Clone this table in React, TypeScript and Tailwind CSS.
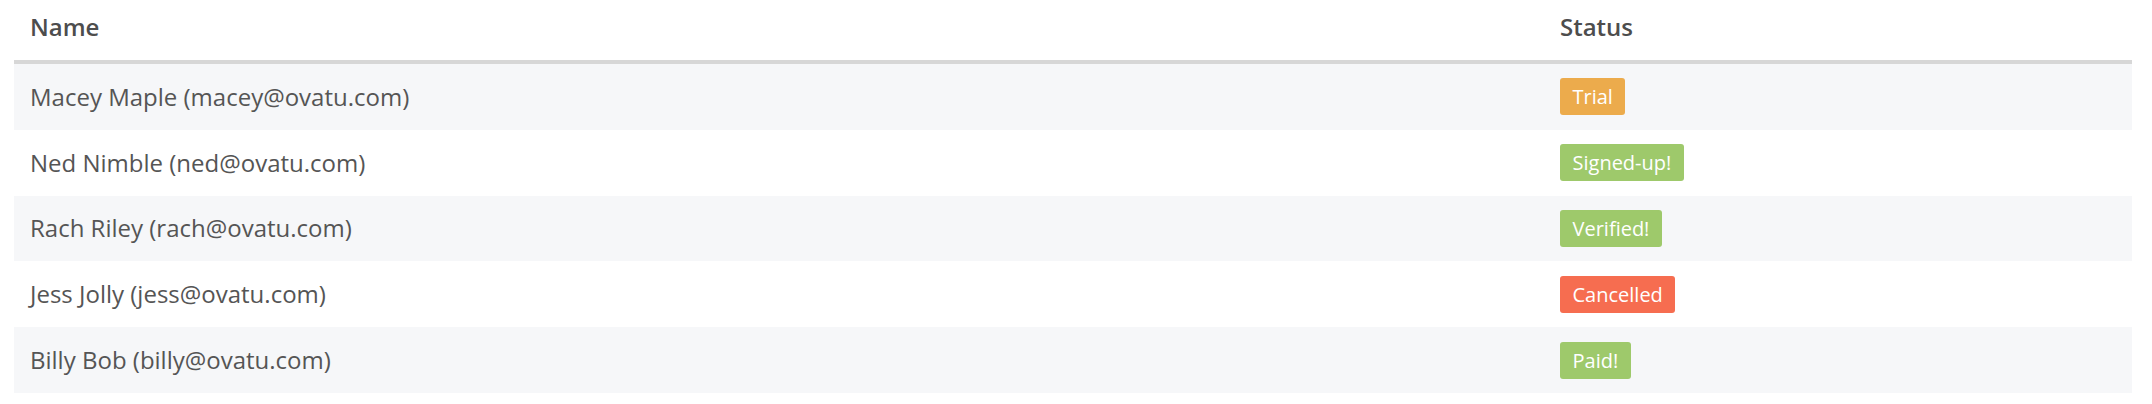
import React from "react";

type Row = { name: string; status: string; color: string };

const rows: Row[] = [
  { name: "Macey Maple (macey@ovatu.com)", status: "Trial", color: "bg-[#ecab4c]" },
  { name: "Ned Nimble (ned@ovatu.com)", status: "Signed-up!", color: "bg-[#9ec96b]" },
  { name: "Rach Riley (rach@ovatu.com)", status: "Verified!", color: "bg-[#9ec96b]" },
  { name: "Jess Jolly (jess@ovatu.com)", status: "Cancelled", color: "bg-[#f66d50]" },
  { name: "Billy Bob (billy@ovatu.com)", status: "Paid!", color: "bg-[#9ec96b]" },
];

export default function App() {
  return (
    <div
      className="w-[2152px] h-[404px] bg-white pl-[14px] pr-[20px]"
      style={{ fontFamily: '"Open Sans", "Noto Sans", sans-serif' }}
    >
      <div className="grid grid-cols-[1530px_1fr] border-b-4 border-[#d7d7d7] text-[24px] leading-[34px] font-semibold text-[#4d4d4d]">
        <div className="pl-[16px] pt-[10px] pb-[16px]">Name</div>
        <div className="pl-[16px] pt-[10px] pb-[16px]">Status</div>
      </div>
      {rows.map((r, i) => (
        <div
          key={r.name}
          className={`grid grid-cols-[1530px_1fr] items-center h-[65.8px] ${
            i % 2 === 0 ? "bg-[#f6f7f9]" : "bg-white"
          }`}
        >
          <div className="pl-[16px] text-[24px] leading-[34px] text-[#555555]">{r.name}</div>
          <div className="pl-[16px] flex">
            <span
              className={`${r.color} text-white text-[20px] leading-[29px] px-[12.5px] py-[4px] rounded-[3px]`}
            >
              {r.status}
            </span>
          </div>
        </div>
      ))}
    </div>
  );
}
